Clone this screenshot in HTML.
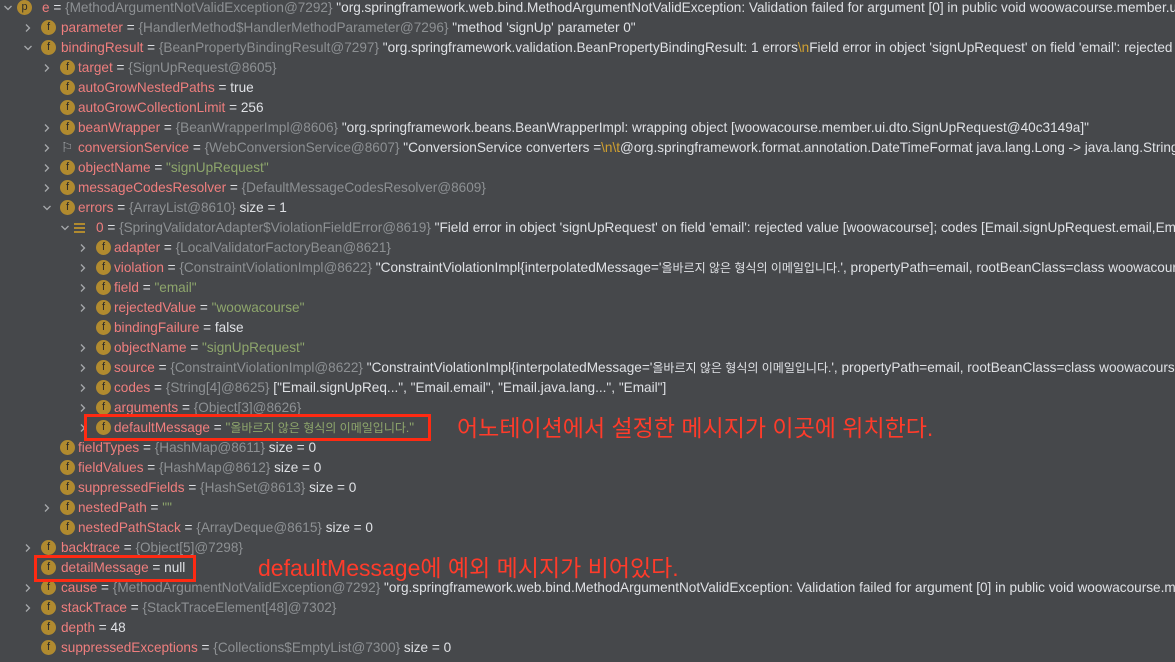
<!DOCTYPE html>
<html style="overflow:hidden"><head><meta charset="utf-8"><style>
body{margin:0;width:1175px;height:662px;background:#46484b;overflow:hidden;font-family:"Liberation Sans","Noto Sans CJK KR",sans-serif;font-size:13.6px;color:#dfe1e5;position:relative}
#c{position:absolute;left:0;top:0;width:1175px;height:662px;overflow:hidden}
.r{position:absolute;height:20px;line-height:20px;white-space:nowrap;left:0;width:1175px;overflow:hidden}
.a{position:absolute;top:5px;width:10px;height:10px}
.i{position:absolute;top:2px;width:15px;height:15px;border-radius:50%;background:#b08a2f;color:#2b2b2b;font-size:11px;line-height:15px;text-align:center}
.t{position:absolute;top:0}
.n{color:#ef7e7e}.g{color:#8d9093}.s{color:#8ea66c}
.k{font-size:12px}
.box{position:absolute;border:3px solid #ff2a12}
.ann{position:absolute;color:#ff3b2a;font-size:23px;line-height:26px;white-space:nowrap}
</style></head><body>
<div id="c"></div>
<div class="box" style="left:84px;top:414px;width:341px;height:21px"></div>
<div class="box" style="left:34px;top:555px;width:156px;height:21px"></div>
<div class="ann" style="left:457px;top:415px">어노테이션에서 설정한 메시지가 이곳에 위치한다.</div>
<div class="ann" style="left:258px;top:555px">defaultMessage에 예외 메시지가 비어있다.</div>
<script>
var K='<span class=k>올바르지 않은 형식의 이메일입니다.</span>';
var rows=[
[0,'v','p','e',' = <span class=g>{MethodArgumentNotValidException@7292}</span> "org.springframework.web.bind.MethodArgumentNotValidException: Validation failed for argument [0] in public void woowacourse.member.ui.MemberController.signUp"'],
[1,'>','f','parameter',' = <span class=g>{HandlerMethod$HandlerMethodParameter@7296}</span> "method \'signUp\' parameter 0"'],
[1,'v','f','bindingResult',' = <span class=g>{BeanPropertyBindingResult@7297}</span> "org.springframework.validation.BeanPropertyBindingResult: 1 errors<span style="color:#d0a030">\\n</span>Field error in object \'signUpRequest\' on field \'email\': rejected value"'],
[2,'>','f','target',' = <span class=g>{SignUpRequest@8605}</span>'],
[2,'','f','autoGrowNestedPaths',' = true'],
[2,'','f','autoGrowCollectionLimit',' = 256'],
[2,'>','f','beanWrapper',' = <span class=g>{BeanWrapperImpl@8606}</span> "org.springframework.beans.BeanWrapperImpl: wrapping object [woowacourse.member.ui.dto.SignUpRequest@40c3149a]"'],
[2,'>','flag','conversionService',' = <span class=g>{WebConversionService@8607}</span> "ConversionService converters =<span style="color:#d0a030">\\n\\t</span>@org.springframework.format.annotation.DateTimeFormat java.lang.Long -> java.lang.String"'],
[2,'>','f','objectName',' = <span class=s>"signUpRequest"</span>'],
[2,'>','f','messageCodesResolver',' = <span class=g>{DefaultMessageCodesResolver@8609}</span>'],
[2,'v','f','errors',' = <span class=g>{ArrayList@8610}</span>  size = 1'],
[3,'v','list','0',' = <span class=g>{SpringValidatorAdapter$ViolationFieldError@8619}</span> "Field error in object \'signUpRequest\' on field \'email\': rejected value [woowacourse]; codes [Email.signUpRequest.email,Email"'],
[4,'>','f','adapter',' = <span class=g>{LocalValidatorFactoryBean@8621}</span>'],
[4,'>','f','violation',' = <span class=g>{ConstraintViolationImpl@8622}</span> "ConstraintViolationImpl{interpolatedMessage=\''+K+'\', propertyPath=email, rootBeanClass=class woowacourse"'],
[4,'>','f','field',' = <span class=s>"email"</span>'],
[4,'>','f','rejectedValue',' = <span class=s>"woowacourse"</span>'],
[4,'','f','bindingFailure',' = false'],
[4,'>','f','objectName',' = <span class=s>"signUpRequest"</span>'],
[4,'>','f','source',' = <span class=g>{ConstraintViolationImpl@8622}</span> "ConstraintViolationImpl{interpolatedMessage=\''+K+'\', propertyPath=email, rootBeanClass=class woowacourse"'],
[4,'>','f','codes',' = <span class=g>{String[4]@8625}</span> ["Email.signUpReq...", "Email.email", "Email.java.lang...", "Email"]'],
[4,'>','f','arguments',' = <span class=g>{Object[3]@8626}</span>'],
[4,'>','f','defaultMessage',' = <span class=s>"'+K+'"</span>'],
[2,'','f','fieldTypes',' = <span class=g>{HashMap@8611}</span>  size = 0'],
[2,'','f','fieldValues',' = <span class=g>{HashMap@8612}</span>  size = 0'],
[2,'','f','suppressedFields',' = <span class=g>{HashSet@8613}</span>  size = 0'],
[2,'>','f','nestedPath',' = <span class=s>""</span>'],
[2,'','f','nestedPathStack',' = <span class=g>{ArrayDeque@8615}</span>  size = 0'],
[1,'>','f','backtrace',' = <span class=g>{Object[5]@7298}</span>'],
[1,'','f','detailMessage',' = null'],
[1,'>','f','cause',' = <span class=g>{MethodArgumentNotValidException@7292}</span> "org.springframework.web.bind.MethodArgumentNotValidException: Validation failed for argument [0] in public void woowacourse.member"'],
[1,'>','f','stackTrace',' = <span class=g>{StackTraceElement[48]@7302}</span>'],
[1,'','f','depth',' = 48'],
[1,'','f','suppressedExceptions',' = <span class=g>{Collections$EmptyList@7300}</span>  size = 0']
];
var h='';
var R='<svg class=a style="left:X" viewBox="0 0 10 10"><path d="M3 1.5L6.5 5L3 8.5" fill="none" stroke="#a6a9ac" stroke-width="1.3"/></svg>';
var D='<svg class=a style="left:X" viewBox="0 0 10 10"><path d="M1.5 3L5 6.5L8.5 3" fill="none" stroke="#a6a9ac" stroke-width="1.3"/></svg>';
rows.forEach(function(r,k){
 var L=r[0],ax=[3,23,42,60,78][L],ix=[17,41,60,78,96][L],nx=[42,61,78,96,114][L];
 var y=k*20-2;
 var arrow=r[1]=='v'?D.replace('X',ax+'px'):r[1]=='>'?R.replace('X',ax+'px'):'';
 var icon;
 if(r[2]=='list')icon='<span style="position:absolute;left:'+(ix-4)+'px;top:5px;width:11px;height:10px;background:linear-gradient(#b08a2f 0 2px,transparent 2px 4px,#b08a2f 4px 6px,transparent 6px 8px,#b08a2f 8px 10px)"></span>';
 else if(r[2]=='flag')icon='<span class=t style="left:'+(ix+1)+'px;color:#a0a3a6">⚐</span>';
 else icon='<span class=i style="left:'+ix+'px">'+r[2]+'</span>';
 h+='<div class=r style="top:'+y+'px">'+arrow+icon+'<span class=t style="left:'+nx+'px"><span class=n>'+r[3]+'</span>'+r[4]+'</span></div>';
});
document.getElementById('c').innerHTML=h;
</script>
</body></html>
